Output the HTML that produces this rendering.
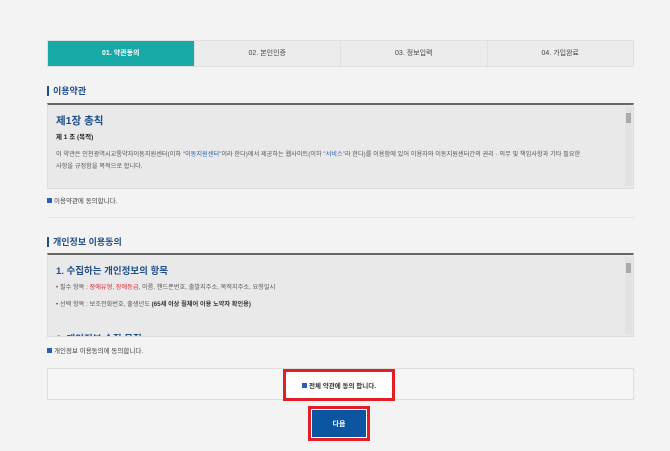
<!DOCTYPE html>
<html><head><meta charset="utf-8"><style>
*{margin:0;padding:0;box-sizing:border-box}
body{width:670px;height:451px;background:#f3f3f3;font-family:"Liberation Sans","Noto Sans CJK KR",sans-serif;position:relative;overflow:hidden;color:#333}
.abs{position:absolute}
.tabs{left:47px;top:40px;width:587px;height:27px;display:flex;border:1px solid #e0e0e0}
.tabs div{flex:1;background:#ececec;border-left:1px solid #e0e0e0;font-size:7px;text-align:center;line-height:25px;color:#444}
.tabs div.on{background:#17a9a5;color:#fff;font-weight:bold;border-left:none}
.h{font-size:9px;color:#1f4e8c;font-weight:bold;padding-left:4px;border-left:2px solid #1f4e8c;line-height:10px}
.box{left:47px;width:587px;background:#e9e9e9;border-top:2px solid #666;border-bottom:1px solid #ddd;border-right:1px solid #ddd;border-left:1px solid #ddd;overflow:hidden}
.sb{position:absolute;right:1px;top:2px;bottom:2px;width:7px;background:#e2e2e2}
.sb i{position:absolute;left:1px;top:6px;width:5px;height:10px;background:#aaa}
.chk{font-size:6.5px;color:#444;display:flex;align-items:center}
.chk b{display:inline-block;width:5px;height:5px;background:#2a5fb8;margin-right:2px}
</style></head><body>
<div class="abs tabs"><div class="on">01. 약관동의</div><div>02. 본인인증</div><div>03. 정보입력</div><div>04. 가입완료</div></div>

<div class="abs h" style="left:47px;top:86px">이용약관</div>
<div class="abs box" style="top:103px;height:86px">
 <div style="position:absolute;left:8px;top:8px;font-size:10.5px;color:#1f4e8c;font-weight:bold">제1장 총칙</div>
 <div style="position:absolute;left:8px;top:26px;font-size:6.5px;font-weight:bold;color:#222">제 1 조 (목적)</div>
 <div style="position:absolute;left:8px;top:44px;width:580px;font-size:6.2px;line-height:12px;color:#555;white-space:nowrap">이 약관은 인천광역시교통약자이동지원센터(이하 "<span style="color:#2a5fb8">이동지원센터</span>"이라 한다)에서 제공하는 웹사이트(이하 "<span style="color:#2a5fb8">서비스</span>"라 한다)를 이용함에 있어 이용자와 이동지원센터간의 권리 · 의무 및 책임사항과 기타 필요한<br>사항을 규정함을 목적으로 합니다.</div>
 <div class="sb"><i></i></div>
</div>
<div class="abs chk" style="left:47px;top:195px"><b></b>이용약관에 동의합니다.</div>
<div class="abs" style="left:47px;top:217px;width:587px;height:1px;background:#e6e6e6"></div>

<div class="abs h" style="left:47px;top:237px">개인정보 이용동의</div>
<div class="abs box" style="top:253px;height:84px">
 <div style="position:absolute;left:8px;top:8px;font-size:9.5px;color:#1f4e8c;font-weight:bold">1. 수집하는 개인정보의 항목</div>
 <div style="position:absolute;left:8px;top:27px;font-size:6.2px;color:#555">• 필수 항목 : <span style="color:#e02030">장애유형, 장애등급</span>, 이름, 핸드폰번호, 출발지주소, 목적지주소, 요청일시</div>
 <div style="position:absolute;left:8px;top:44px;font-size:6.2px;color:#555">• 선택 항목 : 보조전화번호, 출생년도 <b style="color:#333">(65세 이상 휠체어 이용 노약자 확인용)</b></div>
 <div style="position:absolute;left:8px;top:76px;font-size:9.5px;color:#1f4e8c;font-weight:bold">2. 개인정보 수집 목적</div>
 <div class="sb"><i></i></div>
</div>
<div class="abs chk" style="left:47px;top:345px"><b></b>개인정보 이용동의에 동의합니다.</div>

<div class="abs" style="left:47px;top:368px;width:587px;height:32px;background:#f6f6f6;border:1px solid #ddd"></div>
<div class="abs" style="left:283px;top:369px;width:112px;height:32px;background:#fff;border:3px solid #e41e26;font-size:6.5px;font-weight:bold;color:#333;display:flex;align-items:center;justify-content:center"><b style="display:inline-block;width:5px;height:5px;background:#2a5fb8;margin-right:2px"></b>전체 약관에 동의 합니다.</div>
<div class="abs" style="left:308px;top:406px;width:62px;height:35px;border:3px solid #e41e26;padding:1px;background:#fff"><div style="width:100%;height:100%;background:#0c55a0;color:#fff;font-size:7px;font-weight:bold;display:flex;align-items:center;justify-content:center">다음</div></div>
</body></html>
